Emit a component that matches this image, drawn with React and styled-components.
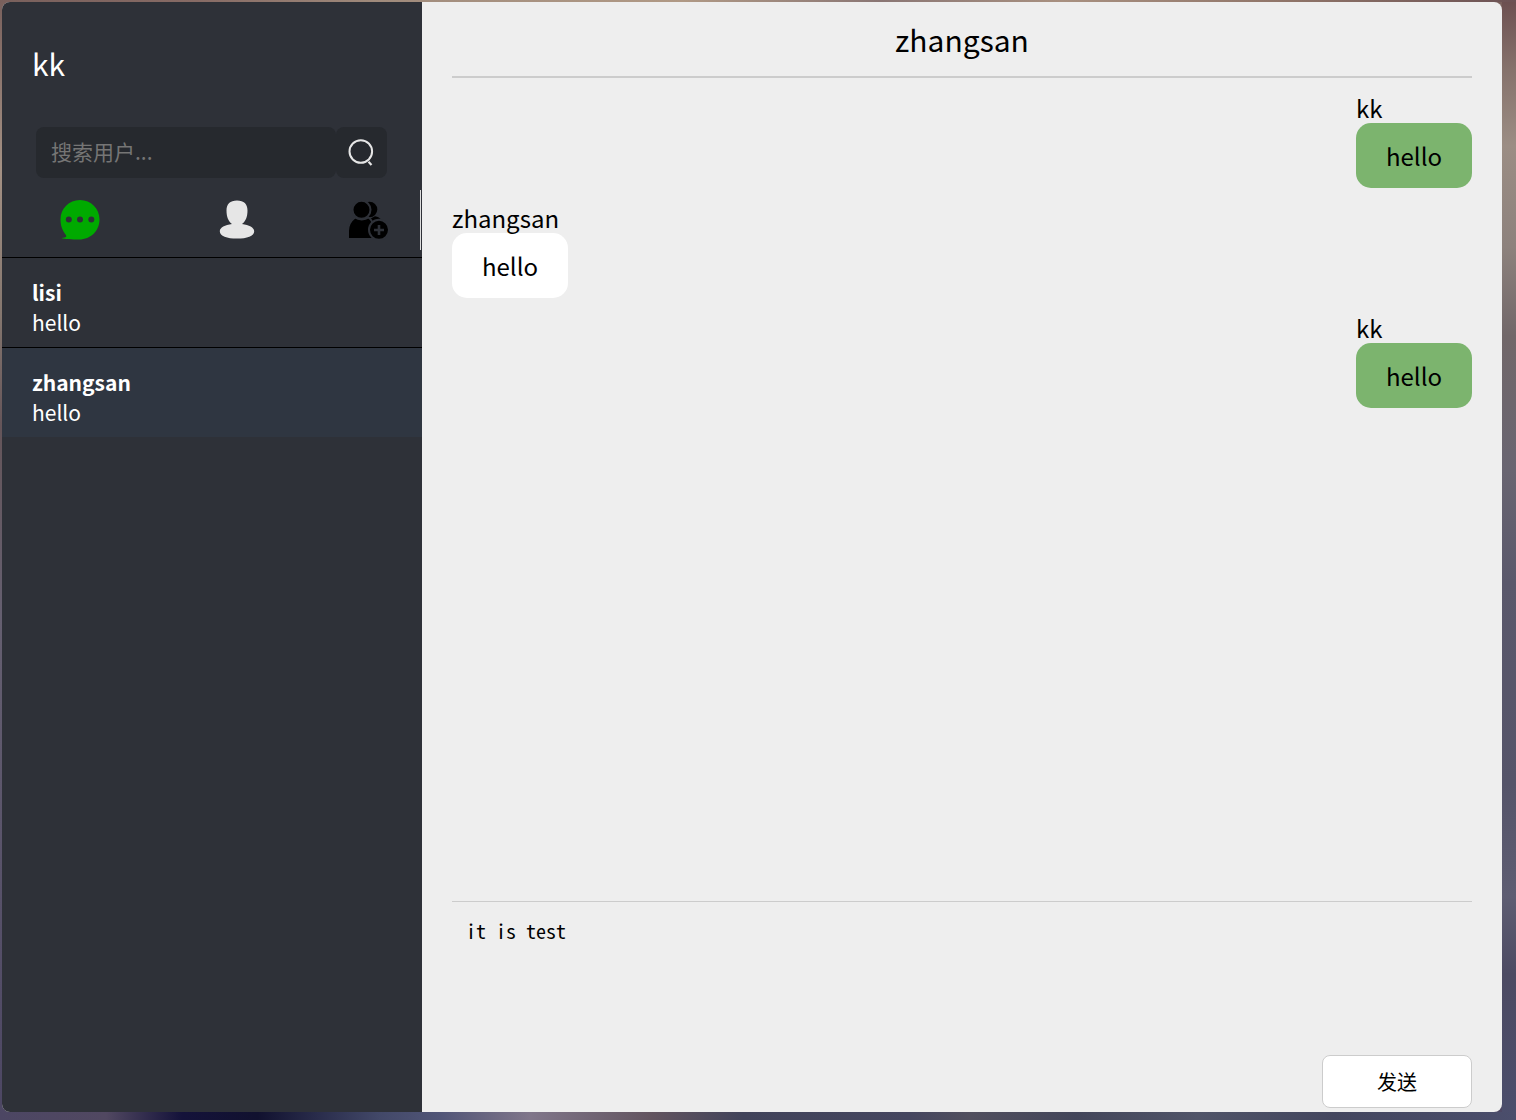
import React, { useState } from 'react';
import styled, { createGlobalStyle } from 'styled-components';

const chats = [
  { name: 'lisi', last: 'hello' },
  { name: 'zhangsan', last: 'hello' },
];

const messages = [
  { id: 1, from: 'kk', text: 'hello', mine: true },
  { id: 2, from: 'zhangsan', text: 'hello', mine: false },
  { id: 3, from: 'kk', text: 'hello', mine: true },
];

function ChatIcon() {
  return (
    <svg width="40" height="40" viewBox="0 0 40 40">
      <path
        fill="#00aa00"
        d="M20 0C31 0 39.500 8.500 39.500 19.500S31 39.500 19 39.500C12 39.500 5 39.300 1.500 38C4 37.800 6.200 37.500 6.300 36.300C6.300 35 4.800 33.800 3.500 31.500C1.500 28 .500 24 .500 19.500C.500 8.500 9 0 20 0Z"
      />
      <g fill="#2e3138">
        <circle cx="8.800" cy="19.500" r="3" />
        <circle cx="20" cy="19.500" r="3" />
        <circle cx="31.300" cy="19.500" r="3" />
      </g>
    </svg>
  );
}

function UserIcon() {
  return (
    <svg width="40" height="40" viewBox="0 0 40 40">
      <path
        fill="#e6e6e6"
        d="M20 .500C27 .500 30.500 4 30.500 10.500C30.500 17 28.500 21.500 25 24C32 24.800 37.200 27.500 37.200 31.200C37.200 36 30 38.600 20 38.600S2.800 36 2.800 31.200C2.800 27.500 8 24.800 15 24C11.500 21.500 9.500 17 9.500 10.500C9.500 4 13 .500 20 .500Z"
      />
    </svg>
  );
}

function AddUserIcon() {
  return (
    <svg width="40" height="40" viewBox="0 0 40 40">
      <circle cx="21.500" cy="9.500" r="7.800" />
      <path d="M21 19.500L27 16.300C30 16.500 32 18 33.500 20.500L25 25Z" />
      <g stroke="#2e3138" strokeWidth="2">
        <circle cx="13.500" cy="9.800" r="9" />
        <path d="M0 39V31C0 25 3 20.500 7 17.500C10.500 20 17 20 20.500 17.500C24.500 20 27 25 27 39Z" />
        <circle cx="31" cy="29.800" r="10" />
      </g>
      <path d="M31 25V35M26 30H36" stroke="#2e3138" strokeWidth="2.600" />
    </svg>
  );
}

function SearchIcon() {
  return (
    <svg width="26" height="28" viewBox="0 0 26 28" fill="none" stroke="#e6e6e6">
      <circle cx="12.800" cy="12.500" r="11.300" strokeWidth="2" />
      <path d="M20.500 22.800L23.500 26" strokeWidth="2.200" />
    </svg>
  );
}

export default function App() {
  const [current, setCurrent] = useState('zhangsan');
  const [draft, setDraft] = useState('it is test');

  return (
    <Desktop>
      <GlobalStyle />
      <Window>
        <Sidebar>
          <UserName>kk</UserName>
          <SearchBar onSubmit={e => e.preventDefault()}>
            <SearchInput type="text" aria-label="搜索用户" placeholder="搜索用户..." />
            <SearchButton type="submit" aria-label="搜索">
              <SearchIcon />
            </SearchButton>
          </SearchBar>
          <Tabs>
            <Tab type="button" aria-label="聊天">
              <ChatIcon />
            </Tab>
            <Tab type="button" aria-label="好友">
              <UserIcon />
            </Tab>
            <Tab type="button" aria-label="添加好友" $last>
              <AddUserIcon />
            </Tab>
          </Tabs>
          {chats.map(chat => (
            <ChatItem
              key={chat.name}
              type="button"
              $active={chat.name === current}
              onClick={() => setCurrent(chat.name)}
            >
              <strong>{chat.name}</strong>
              <span>{chat.last}</span>
            </ChatItem>
          ))}
        </Sidebar>
        <Main>
          <Title>{current}</Title>
          <MessageList>
            {messages.map(message => (
              <Message key={message.id} $mine={message.mine}>
                <Sender>{message.from}</Sender>
                <Bubble $mine={message.mine}>{message.text}</Bubble>
              </Message>
            ))}
          </MessageList>
          <Composer onSubmit={e => e.preventDefault()}>
            <Draft
              aria-label="消息"
              spellCheck={false}
              value={draft}
              onChange={e => setDraft(e.target.value)}
            />
            <SendButton type="submit">发送</SendButton>
          </Composer>
        </Main>
      </Window>
    </Desktop>
  );
}

const GlobalStyle = createGlobalStyle`
  * {
    box-sizing: border-box;
  }
  body {
    margin: 0;
    font-family: 'Noto Sans CJK SC', sans-serif;
  }
  button, input {
    font-family: inherit;
  }
`;

const Desktop = styled.div`
  height: 100vh;
  padding: 2px 14px 8px 2px;
  background:
    linear-gradient(90deg, #4c4663 0%, #514861 7%, #14123a 12%, #11112f 17%, #424868 25%, #515577 29%, #80768a 35%, #62545f 43%, #41435a 49%, #45465f 60%, #514f5e 64%, #43465a 71%, #505468 79%, #43465e 88%, #4b4e6c 100%) bottom / 100% 8px no-repeat,
    linear-gradient(90deg, #79605c 0%, #876b65 13%, #a08b7c 25%, #b09985 45%, #8a7674 58%, #a89080 70%, #8f7468 85%, #6c5254 100%) top / 100% 2px no-repeat,
    linear-gradient(180deg, #6c4f50 0%, #85716b 6%, #9b8d84 13%, #8d827d 22%, #716769 30%, #696571 42%, #5a586b 52%, #555469 70%, #5e5d72 80%, #4c4a62 87%, #4b4e6c 100%) right / 14px 100% no-repeat,
    linear-gradient(180deg, #79605c 0%, #a49184 15%, #85776f 28%, #655559 38%, #655f70 55%, #4c4663 100%);
`;

const Window = styled.div`
  display: flex;
  height: 100%;
  border-radius: 8px;
  overflow: hidden;
  background: #eee;
`;

const Sidebar = styled.aside`
  flex: 0 0 420px;
  background: #2e3138;
  color: #fff;
`;

const UserName = styled.h1`
  margin: 0;
  padding: 36px 30px 0;
  height: 125px;
  font-size: 30px;
  font-weight: 400;
  line-height: 50px;
`;

const SearchBar = styled.form`
  display: flex;
  padding: 0 35px 0 34px;
`;

const SearchInput = styled.input`
  flex: 1;
  min-width: 0;
  height: 51px;
  padding: 0 15px 3px;
  border: 0;
  border-radius: 8px;
  background: #26292e;
  color: #fff;
  font-size: 21px;
  &::placeholder {
    color: #757575;
  }
`;

const SearchButton = styled.button`
  display: flex;
  align-items: center;
  justify-content: center;
  width: 51px;
  height: 51px;
  padding: 0 2px 0 0;
  border: 0;
  border-radius: 8px;
  background: #26292e;
  cursor: pointer;
`;

const Tabs = styled.nav`
  display: grid;
  grid-template-columns: 156px 158px 1fr;
  height: 60px;
  margin: 12px 1px 7px 0;
`;

const Tab = styled.button`
  display: flex;
  align-items: center;
  justify-content: center;
  padding: 0;
  border: 0;
  border-right: ${props => (props.$last ? '1px solid #ddd' : '0')};
  background: none;
  cursor: pointer;
`;

const ChatItem = styled.button`
  display: block;
  width: 100%;
  height: 90px;
  padding: 19px 30px 10px;
  border: 0;
  border-top: 1px solid #000;
  background: ${props => (props.$active ? '#2f3641' : 'none')};
  color: #fff;
  font-size: 21px;
  line-height: 30px;
  text-align: left;
  cursor: pointer;
  strong,
  span {
    display: block;
  }
`;

const Main = styled.main`
  flex: 1;
  min-width: 0;
  display: flex;
  flex-direction: column;
  padding: 0 30px;
`;

const Title = styled.h2`
  margin: 0;
  height: 76px;
  border-bottom: 2px solid #ccc;
  font-size: 30px;
  font-weight: 400;
  line-height: 74px;
  text-align: center;
`;

const MessageList = styled.section`
  flex: 1;
  min-height: 0;
  display: flex;
  flex-direction: column;
  gap: 15px;
  padding-top: 15px;
  overflow: auto;
`;

const Message = styled.div`
  align-self: ${props => (props.$mine ? 'flex-end' : 'flex-start')};
`;

const Sender = styled.div`
  font-size: 24px;
  line-height: 30px;
`;

const Bubble = styled.div`
  padding: 0 30px;
  border-radius: 15px;
  background: ${props => (props.$mine ? '#7cb46e' : '#fff')};
  font-size: 24px;
  line-height: 65px;
`;

const Composer = styled.form`
  display: flex;
  flex-direction: column;
  height: 211px;
  padding-bottom: 4px;
  border-top: 1px solid #ccc;
`;

const Draft = styled.textarea`
  flex: 1;
  padding: 14px;
  border: 0;
  outline: 0;
  resize: none;
  background: none;
  color: #000;
  font-family: 'Noto Sans Mono CJK SC', monospace;
  font-size: 20px;
  font-weight: 300;
  line-height: 30px;
`;

const SendButton = styled.button`
  align-self: flex-end;
  width: 150px;
  height: 53px;
  border: 1px solid #ccc;
  border-radius: 8px;
  background: #fff;
  color: #000;
  font-size: 20px;
  cursor: pointer;
`;
